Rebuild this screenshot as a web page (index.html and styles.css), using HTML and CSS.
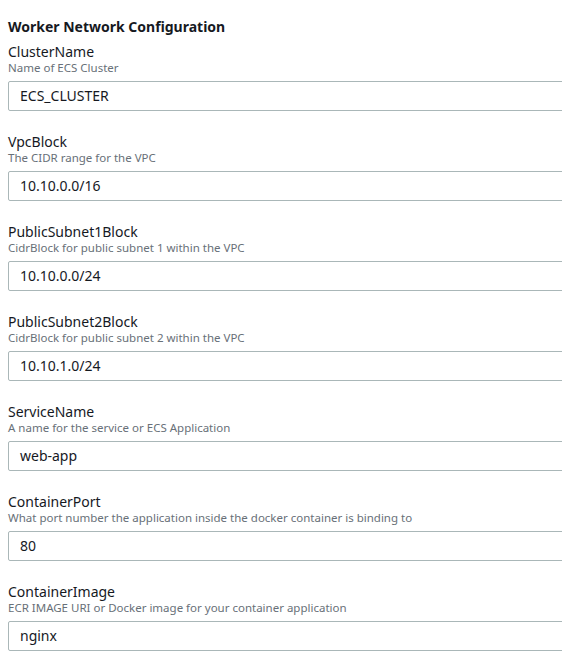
FILE: index.html
```html
<!DOCTYPE html>
<html>
<head>
<meta charset="utf-8">
<link rel="stylesheet" href="styles.css">
</head>
<body>
<div class="page">
  <h2 class="title">Worker Network Configuration</h2>
  <div class="field">
    <div class="label">ClusterName</div>
    <div class="desc">Name of ECS Cluster</div>
    <div class="input">ECS_CLUSTER</div>
  </div>
  <div class="field">
    <div class="label">VpcBlock</div>
    <div class="desc">The CIDR range for the VPC</div>
    <div class="input">10.10.0.0/16</div>
  </div>
  <div class="field">
    <div class="label">PublicSubnet1Block</div>
    <div class="desc">CidrBlock for public subnet 1 within the VPC</div>
    <div class="input">10.10.0.0/24</div>
  </div>
  <div class="field">
    <div class="label">PublicSubnet2Block</div>
    <div class="desc">CidrBlock for public subnet 2 within the VPC</div>
    <div class="input">10.10.1.0/24</div>
  </div>
  <div class="field">
    <div class="label">ServiceName</div>
    <div class="desc">A name for the service or ECS Application</div>
    <div class="input">web-app</div>
  </div>
  <div class="field">
    <div class="label">ContainerPort</div>
    <div class="desc">What port number the application inside the docker container is binding to</div>
    <div class="input">80</div>
  </div>
  <div class="field">
    <div class="label">ContainerImage</div>
    <div class="desc">ECR IMAGE URI or Docker image for your container application</div>
    <div class="input">nginx</div>
  </div>
</div>
</body>
</html>
```
FILE: styles.css
```css
html, body {
  margin: 0;
  padding: 0;
  background: #ffffff;
  overflow: hidden;
}
.page {
  padding: 17px 0 0 8px;
  font-family: "Noto Sans", "Open Sans", sans-serif;
  color: #16191f;
}
.title {
  margin: 0 0 6px 0;
  font-size: 14px;
  line-height: 20px;
  font-weight: 700;
}
.field {
  height: 90px;
  display: flex;
  flex-direction: column;
}
.label {
  font-size: 14px;
  line-height: 18px;
}
.desc {
  font-size: 11.5px;
  line-height: 14px;
  color: #687078;
  margin-bottom: 6px;
}
.input {
  box-sizing: border-box;
  height: 30px;
  width: 580px;
  border: 1px solid #aab7b8;
  border-radius: 2px;
  padding: 0 11px;
  font-size: 14px;
  line-height: 28px;
}
```
